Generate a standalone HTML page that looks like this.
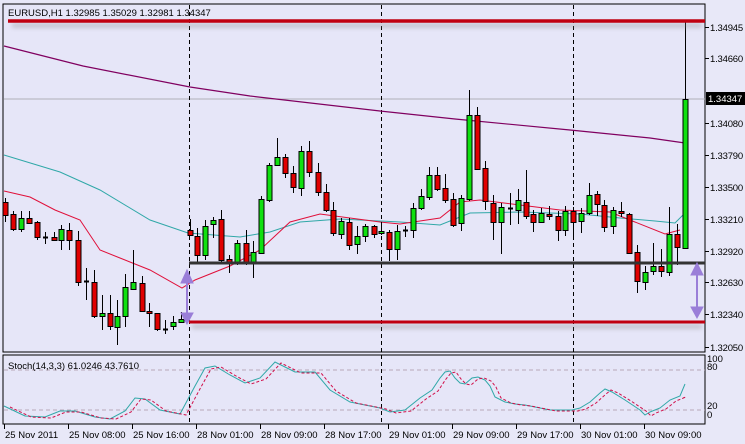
<!DOCTYPE html>
<html><head><meta charset="utf-8"><style>
html,body{margin:0;padding:0;background:#e8e8f8;width:745px;height:444px;overflow:hidden}
svg text{font-family:"Liberation Sans",sans-serif;font-size:9.5px;fill:#000}
</style></head><body>
<svg id="s" width="745" height="444" xmlns="http://www.w3.org/2000/svg">
<defs><filter id="bl" x="-5%" y="-200%" width="110%" height="500%"><feGaussianBlur stdDeviation="2"/></filter></defs>
<rect width="745" height="444" fill="#e8e8f8"/>
<rect x="3" y="4" width="702" height="348" fill="#e6e6f8" stroke="#000" stroke-width="1"/>
<rect x="3" y="355" width="702" height="69" fill="#e6e6f8" stroke="#000" stroke-width="1"/>
<line x1="4" y1="99" x2="705" y2="99" stroke="#b0b0b8" stroke-width="1"/>
<g stroke="#000" stroke-dasharray="4,3" stroke-width="1">
<line x1="189.5" y1="5" x2="189.5" y2="424"/><line x1="381.5" y1="5" x2="381.5" y2="424"/><line x1="573.5" y1="5" x2="573.5" y2="424"/>
</g>
<g stroke="#b8a8b8" stroke-dasharray="4,3"><line x1="4" y1="370" x2="705" y2="370"/><line x1="4" y1="410" x2="705" y2="410"/></g>
<g id="lines" fill="none"></g>
<g id="cd"></g>
<rect x="12" y="23" width="690" height="5" fill="#888" opacity="0.35" filter="url(#bl)"/>
<rect x="192" y="324" width="510" height="5" fill="#888" opacity="0.35" filter="url(#bl)"/>
<line x1="8" y1="21" x2="705" y2="21" stroke="#c00010" stroke-width="3.5"/>
<line x1="189" y1="263" x2="705" y2="263" stroke="#333" stroke-width="3"/>
<line x1="189" y1="322" x2="705" y2="322" stroke="#c00010" stroke-width="3"/>
<g stroke="#9a7ed8" fill="#9a7ed8">
<line x1="187" y1="278" x2="187" y2="316" stroke-width="2"/><polygon points="181,283 187,270 193,283"/><polygon points="181,313 187,324 193,313"/>
<line x1="697" y1="270" x2="697" y2="312" stroke-width="2"/><polygon points="691,275 697,263 703,275"/><polygon points="691,307 697,318 703,307"/>
</g>
<text x="8" y="16">EURUSD,H1  1.32985 1.35029 1.32981 1.34347</text>
<text x="8" y="369" font-size="9">Stoch(14,3,3) 61.0246 43.7610</text>
<g id="ax"></g>
<rect x="706" y="92" width="39" height="13" fill="#000"/>
<text x="708" y="102" style="fill:#fff">1.34347</text>
</svg>
<script>
var ns="http://www.w3.org/2000/svg";
function el(p,t,a,tx){var e=document.createElementNS(ns,t);for(var k in a)e.setAttribute(k,a[k]);if(tx)e.textContent=tx;document.getElementById(p).appendChild(e);return e;}
function pl(pts,c,w,d){el("lines","polyline",{points:pts.map(function(p){return p.join(",")}).join(" "),stroke:c,"stroke-width":w||1,"stroke-dasharray":d||"none"});}
pl([[4,46],[83,66],[190,87],[250,96],[380,111],[455,119],[570,130],[650,138],[685,143]],"#800060",1.2);
pl([[4,155],[60,172],[100,190],[150,220],[188,233],[240,237],[270,232],[300,222],[340,219],[400,222],[440,225],[470,213],[520,212],[580,214],[620,218],[655,221],[675,223],[685,213]],"#30a8a8");
pl([[4,191],[30,197],[55,210],[80,220],[100,250],[120,258],[150,270],[182,288],[195,280],[230,266],[260,250],[290,222],[320,214],[380,222],[400,224],[440,218],[460,202],[480,200],[520,205],[560,210],[610,212],[630,220],[665,234],[680,230]],"#e0103a");
var st=[[4,406],[25,416],[45,417],[60,411],[75,411],[95,417],[110,419],[125,411],[135,398],[145,399],[160,410],[180,414],[195,386],[205,368],[215,366],[230,375],[245,383],[260,378],[275,362],[285,367],[295,372],[315,372],[330,390],[350,402],[370,406],[380,408],[390,412],[405,410],[420,398],[432,390],[440,378],[445,372],[450,371],[455,378],[460,383],[465,384],[472,378],[478,377],[485,380],[490,386],[495,397],[505,402],[515,404],[525,405],[540,408],[550,410],[572,410],[580,408],[590,402],[600,393],[605,389],[612,392],[625,400],[640,410],[645,415],[650,412],[660,408],[670,400],[680,396],[685,384]];
pl(st,"#30a8a8");
pl(st.map(function(p){return [p[0]+6,Math.min(419,p[1]+(p[0]<685?1:0))]}).slice(0,-1).concat([[683,398]]),"#d0104a",1,"3,2");
var C=[[5,202,215,198,222],[13,214,229,211,231],[21,229,218,211,232],[29,218,223,211,224],[37,222,237,221,240],[45,237,237,232,244],[54,237,240,232,241],[61,240,229,225,250],[69,230,240,223,250],[78,240,282,231,286],[86,281,281,268,300],[94,282,316,270,318],[102,316,313,295,330],[110,313,326,295,330],[117,327,316,300,345],[125,316,287,274,327],[133,289,282,250,290],[142,283,311,276,311],[149,311,313,303,327],[157,313,329,313,331],[165,329,329,320,334],[173,326,322,316,330],[181,322,319,312,323],[190,230,235,219,236],[197,236,255,228,262],[205,255,226,220,260],[213,224,220,217,238],[221,219,260,210,262],[229,259,263,255,273],[237,263,243,240,265],[246,243,263,230,265],[253,263,252,241,278],[261,253,199,196,253],[269,200,165,163,202],[277,165,157,138,165],[285,157,173,154,178],[293,173,187,166,193],[301,188,151,146,196],[309,151,172,141,177],[318,172,192,163,196],[326,192,210,184,212],[333,210,233,202,236],[341,234,221,218,239],[349,222,245,218,250],[357,244,236,226,254],[365,236,226,224,242],[374,226,234,225,238],[381,233,231,222,235],[389,232,249,230,261],[397,249,231,225,260],[405,230,230,226,237],[413,230,208,203,238],[421,208,196,189,210],[429,197,175,167,200],[437,175,189,167,191],[445,188,200,174,203],[453,199,225,193,227],[461,223,198,195,231],[469,199,115,90,201],[477,115,169,107,170],[485,168,201,161,210],[493,203,222,195,240],[501,222,207,203,254],[510,208,208,193,225],[518,210,200,189,224],[526,202,216,170,219],[533,214,222,210,232],[541,222,213,208,223],[549,214,216,206,220],[558,216,230,211,241],[565,230,211,206,236],[573,211,222,207,236],[581,221,213,208,233],[589,213,195,183,215],[597,194,204,191,216],[604,205,227,200,232],[613,226,210,207,234],[621,211,213,202,217],[629,214,253,213,254],[637,252,281,245,293],[645,282,272,266,290],[653,271,266,243,275],[661,266,271,249,277],[669,272,234,207,276],[677,234,247,224,265],[685,248,99,22,249]];
C.forEach(function(c){var x=c[0],o=c[1],cl=c[2];el("cd","line",{x1:x+.5,y1:c[3],x2:x+.5,y2:c[4],stroke:"#000"});
var t=Math.min(o,cl),h=Math.max(1,Math.abs(o-cl));
if(h<=1){el("cd","line",{x1:x-2,y1:t+.5,x2:x+3,y2:t+.5,stroke:"#000","stroke-width":2});return;}
el("cd","rect",{x:x-2,y:t+.5,width:5,height:h,fill:cl<o?"#10e010":"#e00000",stroke:"#000","stroke-width":1});});
var P=[["1.34945",31],["1.34660",62],["1.34080",127],["1.33790",159],["1.33500",191],["1.33210",223],["1.32920",255],["1.32630",286],["1.32340",318],["1.32050",351]];
P.forEach(function(p){el("ax","line",{x1:705,y1:p[1]-3.5,x2:709,y2:p[1]-3.5,stroke:"#000"});el("ax","text",{x:710,y:p[1],"letter-spacing":"-0.2"},p[0]);});
[["100",362],["80",370],["20",409],["0",418]].forEach(function(p){el("ax","text",{x:707,y:p[1],"font-size":"9"},p[0]);});
var D=["25 Nov 2011","25 Nov 08:00","25 Nov 16:00","28 Nov 01:00","28 Nov 09:00","28 Nov 17:00","29 Nov 01:00","29 Nov 09:00","29 Nov 17:00","30 Nov 01:00","30 Nov 09:00"];
D.forEach(function(d,i){var x=4+i*64;el("ax","line",{x1:x+.5,y1:424,x2:x+.5,y2:429,stroke:"#000"});el("ax","text",{x:x+1,y:438},d);});
</script>
</body></html>
